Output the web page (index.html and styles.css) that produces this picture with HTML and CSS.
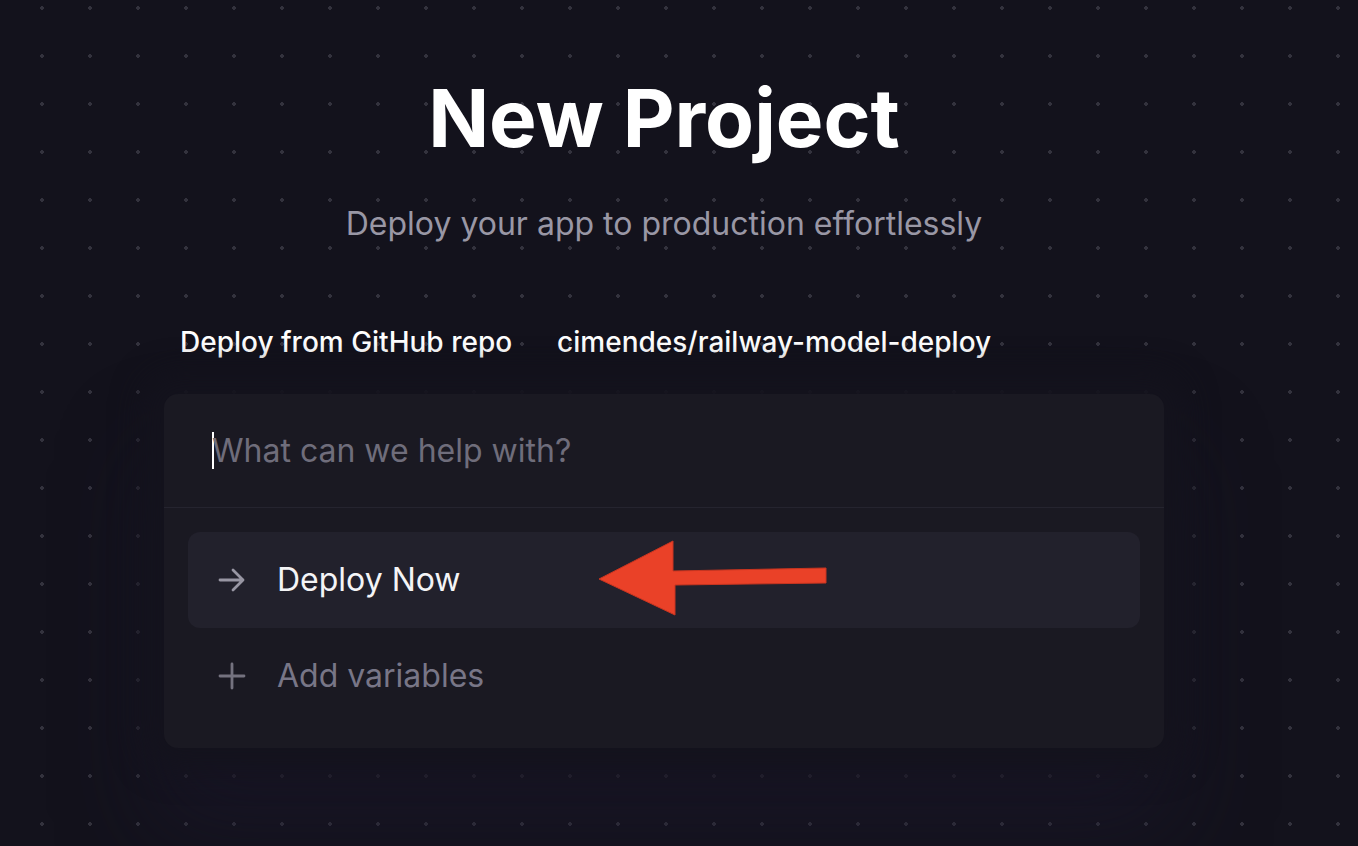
FILE: index.html
```html
<!DOCTYPE html>
<html lang="en">
<head>
<meta charset="utf-8">
<title>New Project</title>
<link rel="stylesheet" href="styles.css">
</head>
<body>
<main class="page">
  <h1 class="title">New Project</h1>
  <p class="subtitle">Deploy your app to production effortlessly</p>
  <div class="source">
    <span class="source-label">Deploy from GitHub repo</span>
    <span class="source-repo">cimendes/railway-model-deploy</span>
  </div>
  <section class="card">
    <div class="prompt">
      <span class="caret"></span>
      <span class="placeholder">What can we help with?</span>
    </div>
    <div class="options">
      <div class="option option-active">
        <svg class="opt-icon" viewBox="0 0 28 28" width="28" height="28" aria-hidden="true">
          <path d="M2 14H25M15 4L25 14L15 24" fill="none" stroke="#9896a3" stroke-width="2.8" stroke-linecap="round" stroke-linejoin="round"/>
        </svg>
        <span class="opt-label">Deploy Now</span>
        <svg class="annot" viewBox="0 0 234 80" width="234" height="80" aria-hidden="true">
          <polygon points="3,41 77,3 77,33 230,30 230,45 79,47 79,77" fill="#ea4128" stroke="#c93520" stroke-width="1"/>
        </svg>
      </div>
      <div class="option">
        <svg class="opt-icon" viewBox="0 0 28 28" width="28" height="28" aria-hidden="true">
          <path d="M14 2V26M2 14H26" fill="none" stroke="#74727f" stroke-width="2.8" stroke-linecap="round"/>
        </svg>
        <span class="opt-label opt-muted">Add variables</span>
      </div>
    </div>
  </section>
</main>
</body>
</html>
```

FILE: styles.css
```css
html, body {
  margin: 0;
  padding: 0;
  height: 100%;
}

body {
  background-color: #13121c;
  background-image: radial-gradient(circle, #33323d 1.6px, transparent 2px);
  background-size: 48px 48px;
  background-position: 18px -16px;
  font-family: Inter, "Noto Sans", "Liberation Sans", sans-serif;
  color: #ffffff;
  overflow: hidden;
}

.page {
  width: 1328px;
  display: flex;
  flex-direction: column;
  align-items: center;
  padding-top: 72px;
}

.title {
  margin: 0;
  font-size: 80px;
  font-weight: 700;
  line-height: 92px;
  letter-spacing: 0;
  color: #ffffff;
}

.subtitle {
  margin: 40px 0 0 0;
  font-size: 32px;
  line-height: 40px;
  color: #9997a5;
}

.source {
  width: 1000px;
  box-sizing: border-box;
  padding-left: 16px;
  margin-top: 80px;
  display: flex;
  gap: 45px;
  font-size: 28px;
  line-height: 36px;
  font-weight: 500;
  color: #ffffff;
}

.card {
  position: relative;
  margin-top: 34px;
  width: 1000px;
  background: #1a1922;
  border-radius: 14px;
  box-shadow: 0 0 30px 22px #14131d, 0 70px 90px 10px rgba(28, 24, 44, 0.55);
}

.prompt {
  height: 114px;
  box-sizing: border-box;
  padding-left: 48px;
  display: flex;
  align-items: center;
  border-bottom: 1px solid #25242f;
}

.caret {
  width: 2px;
  height: 37px;
  background: #ffffff;
  margin-right: -2px;
}

.placeholder {
  font-size: 32px;
  line-height: 40px;
  color: #6f6d7b;
}

.options {
  padding: 24px;
}

.option {
  position: relative;
  height: 96px;
  display: flex;
  align-items: center;
  padding-left: 30px;
  border-radius: 12px;
}

.option-active {
  background: #22212c;
}

.opt-icon {
  flex: none;
}

.opt-label {
  margin-left: 31px;
  font-size: 32px;
  line-height: 40px;
  color: #f4f4f6;
}

.opt-muted {
  color: #787687;
}

.annot {
  position: absolute;
  left: 408px;
  top: 6px;
}
```
